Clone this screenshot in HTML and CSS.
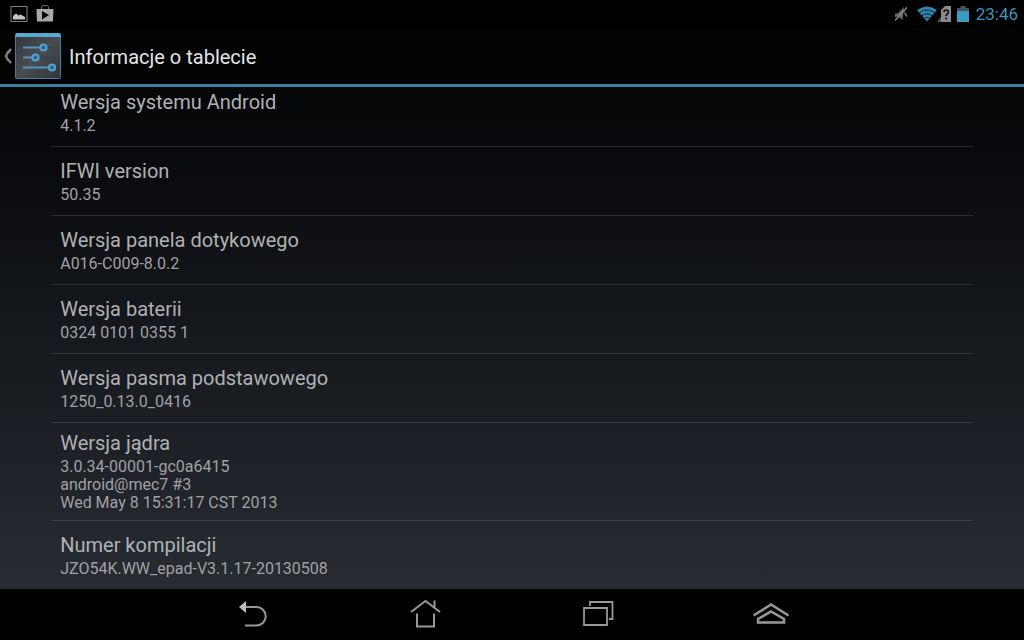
FILE: index.html
```
<!DOCTYPE html>
<html lang="pl">
<head>
  <meta charset="UTF-8">
  <meta name="viewport" content="width=device-width, initial-scale=1">
  <title>Informacje o tablecie</title>
  <link rel="stylesheet" href="styles.css">
</head>
<body>
  <div class="status-bar">
    <div class="notifications">
      <svg width="18" height="18" viewBox="0 0 18 18">
        <rect x="1" y="1.5" width="16" height="15" fill="none" stroke="#808080"/>
        <path d="M3 14.500V11l3-2.500 2.500 2 2-1 4.500 2.500v2.500z" fill="#c4c4c4"/>
      </svg>
      <svg width="18" height="18" viewBox="0 0 18 18">
        <path d="M5.500 4V1.500L7 .5h4l1.500 1V4" fill="none" stroke="#666"/>
        <path d="M.5 4h17l-.5 12.500H1z" fill="#a8a8a8"/>
        <path d="M6 6l7 4-7 4.500z" fill="#050505"/>
      </svg>
    </div>
    <div class="system-icons">
      <svg class="mute" width="14" height="16" viewBox="0 0 14 16">
        <path d="M1 7.500h2.500L10 1 8.500 14 4.500 10.500 1 11z" fill="#686868"/>
        <path d="M1 14.500L13 1.500M10.500 6.500l2.500 4" stroke="#8a8a8a" stroke-width="1.400" fill="none"/>
      </svg>
      <svg width="20" height="16" viewBox="0 0 20 16">
        <path d="M10 15.500L0 4Q10-3 20 4z" fill="#2f86aa"/>
        <path d="M2.500 6.500q7.500-5 15 0M5 9.500q5-3.500 10 0M7.500 12q2.500-1.500 5 0" stroke="#0a2530" stroke-width="1" fill="none"/>
      </svg>
      <svg width="15" height="16" viewBox="0 0 15 16">
        <path d="M0 16L4 11v5z" fill="#555"/>
        <path d="M4 4l4-4h6v16H4z" fill="#8a8a8a"/>
        <path d="M7 6q0-2 2.200-2t2.200 2q0 1.200-1.200 1.900T9.200 10M9.200 11.500V13.500" stroke="#111" stroke-width="1.700" fill="none"/>
      </svg>
      <svg class="battery" width="12" height="16" viewBox="0 0 12 16">
        <path d="M3.500 0h5v2H12v3H0V2h3.500z" fill="#46545a"/>
        <path d="M0 5h12v11H0z" fill="#3a9cc3"/>
      </svg>
      <span class="clock">23:46</span>
    </div>
  </div>

  <header class="action-bar">
    <a class="up-link" href="#" aria-label="Wstecz do ustawień">
      <svg width="8" height="18" viewBox="0 0 8 18">
        <path d="M7 2Q3 6 2 9q1 3.500 5 7" fill="none" stroke="#808080" stroke-width="2.500"/>
      </svg>
      <svg width="48" height="48" viewBox="0 0 48 48">
        <defs>
          <linearGradient id="tile" x1="0" y1="0" x2="1" y2="1">
            <stop offset="0" stop-color="#34383b"/>
            <stop offset=".5" stop-color="#4a4d4f"/>
            <stop offset="1" stop-color="#303437"/>
          </linearGradient>
        </defs>
        <rect x="1.500" y="2" width="45" height="44.500" rx="1" fill="url(#tile)" stroke="#3c7fa8"/>
        <path d="M2 1h44l1 4H1z" fill="#58a9cf"/>
        <path d="M33 15.500h8M25 25.500h16" stroke="#2d4350" stroke-width="1.500"/>
        <path d="M9 15.500h17M9 25.500h9M9 35.500h26" stroke="#4c96c4" stroke-width="1.800"/>
        <g fill="#2b608a" stroke="#559fd0" stroke-width="2.200">
          <circle cx="29.500" cy="15.500" r="3"/>
          <circle cx="21.500" cy="25.500" r="3"/>
          <circle cx="38" cy="35.500" r="3"/>
        </g>
      </svg>
    </a>
    <h1 class="title">Informacje o tablecie</h1>
  </header>

  <main class="content">
    <ul class="info-list">
      <li class="info-item">
        <div class="info-name">Wersja systemu Android</div>
        <div class="info-value">4.1.2</div>
      </li>
      <li class="info-item">
        <div class="info-name">IFWI version</div>
        <div class="info-value">50.35</div>
      </li>
      <li class="info-item">
        <div class="info-name">Wersja panela dotykowego</div>
        <div class="info-value">A016-C009-8.0.2</div>
      </li>
      <li class="info-item">
        <div class="info-name">Wersja baterii</div>
        <div class="info-value">0324 0101 0355 1</div>
      </li>
      <li class="info-item">
        <div class="info-name">Wersja pasma podstawowego</div>
        <div class="info-value">1250_0.13.0_0416</div>
      </li>
      <li class="info-item">
        <div class="info-name">Wersja jądra</div>
        <div class="info-value">3.0.34-00001-gc0a6415<br>android@mec7 #3<br>Wed May 8 15:31:17 CST 2013</div>
      </li>
      <li class="info-item">
        <div class="info-name">Numer kompilacji</div>
        <div class="info-value">JZO54K.WW_epad-V3.1.17-20130508</div>
      </li>
    </ul>
  </main>

  <nav class="nav-bar">
    <button class="nav-button" type="button" aria-label="Wstecz">
      <svg width="40" height="32" viewBox="0 0 40 32">
        <path d="M13 8h10.500a9.200 9.200 0 0 1 0 18.500H12" fill="none" stroke="#989898" stroke-width="2"/>
        <path d="M6 8l7-6v12z" fill="#bdbdbd"/>
      </svg>
    </button>
    <button class="nav-button" type="button" aria-label="Ekran główny">
      <svg width="40" height="32" viewBox="0 0 40 32">
        <path d="M5 13L19.500 2 34 13M28.500 1.500V8M11 14.500v13h17v-13" fill="none" stroke="#989898" stroke-width="2"/>
      </svg>
    </button>
    <button class="nav-button" type="button" aria-label="Ostatnie aplikacje">
      <svg width="40" height="32" viewBox="0 0 40 32">
        <path d="M6 9h23v17H6zM12 7V3h22.500v17H31" fill="none" stroke="#989898" stroke-width="1.800"/>
      </svg>
    </button>
    <button class="nav-button" type="button" aria-label="Menu">
      <svg width="40" height="32" viewBox="0 0 40 32">
        <path d="M2.500 16.500L20 5.500l17.500 11" fill="none" stroke="#989898" stroke-width="2.500"/>
        <path d="M7 23.500v-3.500L20 12.500l13 7.500v3.500z" fill="none" stroke="#989898" stroke-width="2.500"/>
      </svg>
    </button>
  </nav>
</body>
</html>
```
FILE: styles.css
```
* {
  box-sizing: border-box;
}

body {
  margin: 0;
  height: 100vh;
  display: flex;
  flex-direction: column;
  background-color: #000;
  color: #b0b1b2;
  font-family: Roboto, sans-serif;
}

svg {
  display: block;
}

.status-bar {
  height: 28px;
  padding: 0 6px 0 10px;
  display: flex;
  justify-content: space-between;
  align-items: center;
}

.notifications {
  display: flex;
  gap: 8px;
}

.system-icons {
  display: flex;
  align-items: center;
}

.mute {
  margin-right: 9px;
}

.battery {
  margin: 0 7px 0 5px;
}

.clock {
  color: #3a94bb;
  font-size: 17px;
  line-height: 20px;
}

.action-bar {
  height: 59px;
  padding: 0 4px;
  display: flex;
  align-items: center;
  gap: 7px;
  background-color: #020303;
  border-bottom: 3px solid #3a82a2;
}

.up-link {
  display: flex;
  align-items: center;
  gap: 2px;
}

.title {
  margin: 0;
  padding-top: 2px;
  color: #e4e4e4;
  font-size: 20px;
  font-weight: 400;
  line-height: 24px;
}

/* scrolled to the end, so the first row slides under the action bar */
.content {
  flex: 1;
  min-height: 0;
  padding: 0 5%;
  display: flex;
  flex-direction: column;
  justify-content: flex-end;
  overflow: hidden;
  background: linear-gradient(#040507, #272c33);
}

.info-list {
  margin: 0;
  padding: 0;
  list-style: none;
}

.info-item {
  min-height: 69px;
  padding: 8px 9px;
  display: flex;
  flex-direction: column;
  justify-content: center;
  gap: 3px;
  border-bottom: 1px solid rgba(255, 255, 255, 0.13);
}

.info-item:last-child {
  min-height: 68px;
  border-bottom: none;
}

.info-name {
  font-size: 20px;
  line-height: 24px;
}

.info-value {
  font-size: 16px;
  line-height: 18px;
  color: #a0a1a3;
}

.nav-bar {
  height: 51px;
  padding: 0 16.3%;
  display: flex;
}

.nav-button {
  flex: 1;
  padding: 0;
  display: flex;
  justify-content: center;
  align-items: center;
  background: none;
  border: none;
  cursor: pointer;
}
```
